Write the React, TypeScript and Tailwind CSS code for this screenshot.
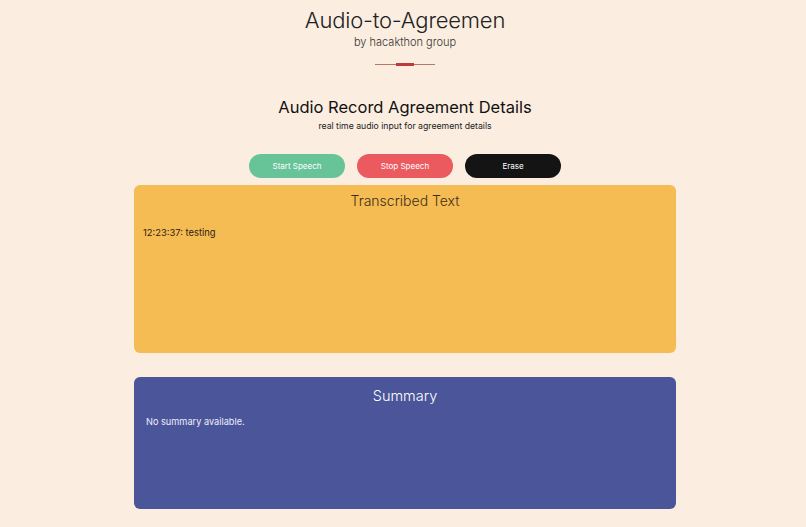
import React from "react";

export default function App() {
  return (
    <div
      className="min-h-[527px] w-full bg-[#fbede0] flex flex-col items-center pl-[4px]"
      style={{ fontFamily: "Inter, 'Noto Sans', sans-serif" }}
    >
      <h1 className="mt-[5px] text-[22px] leading-[30px] font-light tracking-[-0.2px] text-[#222]">Audio-to-Agreemen</h1>
      <p className="text-[11px] leading-[14px] font-light text-[#333]">by hacakthon group</p>
      <div className="relative mt-[14px] h-[3px] w-[60px] flex items-center">
        <div className="h-px w-full bg-[#b8776c]" />
        <div className="absolute left-[21px] top-0 h-[3px] w-[18px] bg-[#c0393b]" />
      </div>
      <h2 className="mt-[30px] text-[16.5px] leading-[22px] font-normal text-[#111]">Audio Record Agreement Details</h2>
      <p className="mt-[2px] text-[8.7px] leading-[12px] text-[#222]">real time audio input for agreement details</p>
      <div className="mt-[22px] flex gap-[12px]">
        <button className="h-[24px] w-[96px] rounded-full bg-[#67c398] text-[8px] text-white">Start Speech</button>
        <button className="h-[24px] w-[96px] rounded-full bg-[#eb5a5f] text-[8px] text-white">Stop Speech</button>
        <button className="h-[24px] w-[96px] rounded-full bg-[#141414] text-[8px] text-white">Erase</button>
      </div>
      <div className="mt-[7px] w-[542px] h-[168px] rounded-[6px] bg-[#f5bc53] flex flex-col">
        <h3 className="mt-[6px] text-center text-[14px] leading-[20px] font-light text-[#3d2f17]">Transcribed Text</h3>
        <p className="mt-[15px] ml-[9px] text-[9.4px] leading-[14px] text-[#2b2110]">12:23:37: testing</p>
      </div>
      <div className="mt-[24px] w-[542px] h-[132px] rounded-[6px] bg-[#4b5599] flex flex-col">
        <h3 className="mt-[9px] text-center text-[14.5px] leading-[20px] font-light text-white">Summary</h3>
        <p className="mt-[9px] ml-[12px] text-[9.2px] leading-[14px] text-[#eef]">No summary available.</p>
      </div>
    </div>
  );
}
